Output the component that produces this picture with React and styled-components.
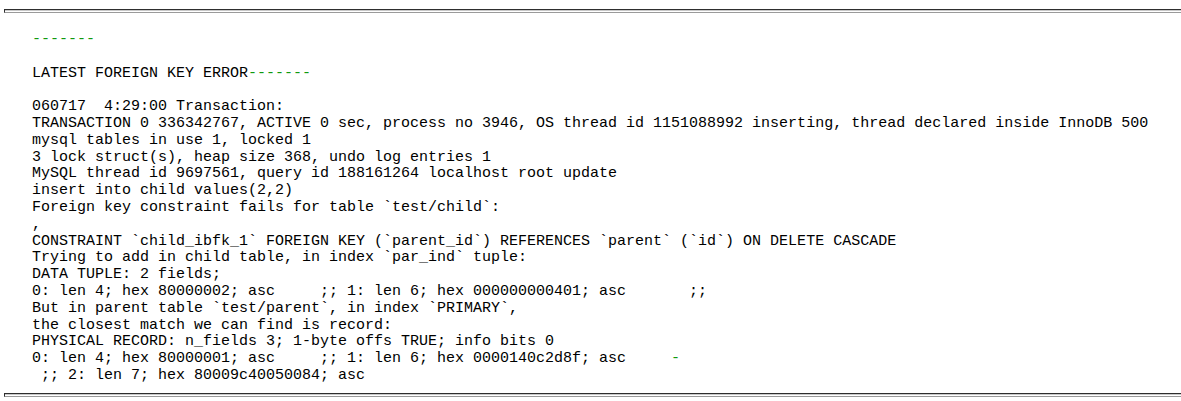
import React from "react";
import styled, { createGlobalStyle } from "styled-components";

const Global = createGlobalStyle`
  html, body { margin: 0; padding: 0; background: #ffffff; }
  body { overflow: hidden; }
`;

const Page = styled.div`
  width: 1181px;
  height: 401px;
  overflow: hidden;
  padding: 9px 0 0 4px;
  box-sizing: border-box;
  background: #ffffff;
`;

const Rule = styled.div`
  height: 2px;
  margin-right: -30px;
  border-top: 1px solid #2e2e2e;
  border-left: 1px solid #2e2e2e;
  border-bottom: 1px solid #9a9a9a;
  box-shadow: inset 0 1px 0 #c8c8c8;
  background: #ffffff;
  box-sizing: content-box;
`;

const Log = styled.pre`
  margin: 19px 0 8px 28px;
  font-family: "Liberation Mono", "Courier New", monospace;
  font-size: 15px;
  line-height: 16.8px;
  color: #000000;
  white-space: pre;
`;

const Mark = styled.span`
  color: #0f9a0f;
`;

const lines = [
  "060717  4:29:00 Transaction:",
  "TRANSACTION 0 336342767, ACTIVE 0 sec, process no 3946, OS thread id 1151088992 inserting, thread declared inside InnoDB 500",
  "mysql tables in use 1, locked 1",
  "3 lock struct(s), heap size 368, undo log entries 1",
  "MySQL thread id 9697561, query id 188161264 localhost root update",
  "insert into child values(2,2)",
  "Foreign key constraint fails for table `test/child`:",
  ",",
  "CONSTRAINT `child_ibfk_1` FOREIGN KEY (`parent_id`) REFERENCES `parent` (`id`) ON DELETE CASCADE",
  "Trying to add in child table, in index `par_ind` tuple:",
  "DATA TUPLE: 2 fields;",
  "0: len 4; hex 80000002; asc     ;; 1: len 6; hex 000000000401; asc       ;;",
  "But in parent table `test/parent`, in index `PRIMARY`,",
  "the closest match we can find is record:",
  "PHYSICAL RECORD: n_fields 3; 1-byte offs TRUE; info bits 0",
];

export default function App() {
  return (
    <>
      <Global />
      <Page>
        <Rule />
        <Log>
          <Mark>-------</Mark>
          {"\n\n"}
          {"LATEST FOREIGN KEY ERROR"}
          <Mark>-------</Mark>
          {"\n\n"}
          {lines.join("\n")}
          {"\n"}
          {"0: len 4; hex 80000001; asc     ;; 1: len 6; hex 0000140c2d8f; asc     "}
          <Mark>-</Mark>
          {"\n"}
          {" ;; 2: len 7; hex 80009c40050084; asc"}
        </Log>
        <Rule />
      </Page>
    </>
  );
}
